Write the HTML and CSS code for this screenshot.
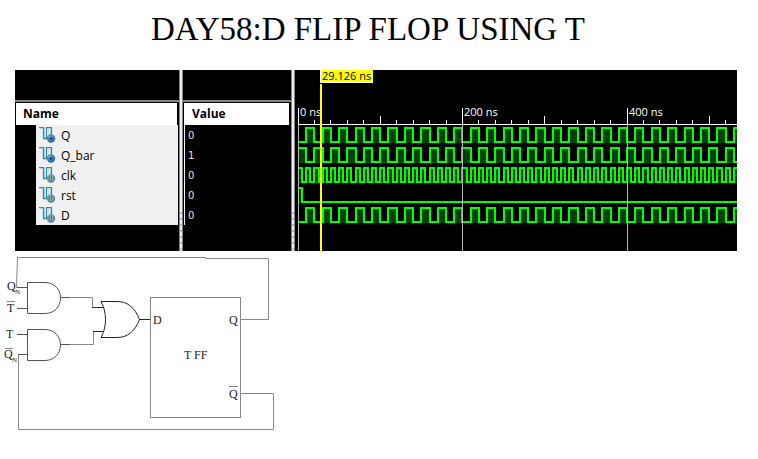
FILE: index.html
```html
<!DOCTYPE html>
<html lang="en">
<head>
<meta charset="utf-8">
<title>DAY58:D FLIP FLOP USING T</title>
<link rel="stylesheet" href="styles.css">
</head>
<body>
<svg class="defs" aria-hidden="true">
  <defs>
    <radialGradient id="ball" cx="40%" cy="35%" r="65%">
      <stop offset="0" stop-color="#6fb0dd"/>
      <stop offset="1" stop-color="#20629f"/>
    </radialGradient>
    <radialGradient id="ball-in" cx="40%" cy="35%" r="65%">
      <stop offset="0" stop-color="#8fb6bd"/>
      <stop offset="1" stop-color="#3b7fb0"/>
    </radialGradient>
    <symbol id="pulse" viewBox="0 0 17 17">
      <path d="M5.500 2V11.500M9.500 11V2.500H11.500V8" fill="none" stroke="#c3dcea" stroke-width="1"/>
      <path d="M0 0.500H4.500V11.500H7.500V0.500H12.500V8" fill="none" stroke="#2f8c98" stroke-width="1.300"/>
    </symbol>
    <symbol id="signal-out" viewBox="0 0 17 17">
      <use href="#pulse" width="17" height="17"/>
      <circle cx="12" cy="11.500" r="4.200" fill="url(#ball)"/>
      <path d="M10.500 11.500H13.500M12 10V13" stroke="#092f5c" fill="none"/>
    </symbol>
    <symbol id="signal-in" viewBox="0 0 17 17">
      <use href="#pulse" width="17" height="17"/>
      <circle cx="12" cy="11.500" r="4.200" fill="url(#ball-in)"/>
      <path d="M11.500 13.500V10.500M13.500 13.500V10.500" stroke="#b3b878" fill="none"/>
      <path d="M10.500 9.500V12.500M12.500 9.500V13" stroke="#2d6cab" fill="none"/>
    </symbol>
  </defs>
</svg>

<h1 class="title">DAY58:D FLIP FLOP USING T</h1>

<main>
  <section class="viewer">
    <div class="pane names">
      <h2 class="head">Name</h2>
      <ul class="rows">
        <li><svg class="icon"><use href="#signal-out"/></svg>Q</li>
        <li><svg class="icon"><use href="#signal-out"/></svg>Q_bar</li>
        <li><svg class="icon"><use href="#signal-in"/></svg>clk</li>
        <li><svg class="icon"><use href="#signal-in"/></svg>rst</li>
        <li><svg class="icon"><use href="#signal-in"/></svg>D</li>
      </ul>
    </div>
    <div class="splitter"></div>
    <div class="pane values">
      <h2 class="head">Value</h2>
      <ul class="rows">
        <li>0</li>
        <li>1</li>
        <li>0</li>
        <li>0</li>
        <li>0</li>
      </ul>
    </div>
    <div class="splitter"></div>
    <div class="waves">
      <svg id="scope" class="scope" role="img" aria-label="Waveforms"></svg>
      <span class="marker">29.126 ns</span>
    </div>
  </section>

  <svg class="circuit" width="290" height="190" viewBox="0 251 290 190" role="img" aria-label="D flip flop built from a T flip flop">
    <g class="wire">
      <path d="M27 287.500H16.500L17.500 257.500H206V258.500H268.500V319.500H240"/>
      <path d="M27 354.500H18.500V429.500H273.500V393.500H240"/>
      <path d="M69 297.500H92.500V307.500M69 344.500H93.500V331.500"/>
      <rect x="150.500" y="297.500" width="90" height="120"/>
      <path d="M7 301.500H15M5 348.500H13M229 386.500H238"/>
    </g>
    <g class="gate">
      <path d="M17 287.500H27M17 308.500H27M17 334.500H27M18 354.500H27M61 297.500H70M61 344.500H70"/>
      <path d="M27.500 282.500H45C54 282.500 60.500 289 60.500 298C60.500 307 54 313.500 45 313.500H27.500Z"/>
      <path d="M27.500 329.500H45C54 329.500 60.500 336 60.500 345C60.500 354 54 360.500 45 360.500H27.500Z"/>
    </g>
    <g class="gate strong">
      <path d="M92 307.500H104M93 331.500H104M139 319.500H150"/>
      <path d="M101 301.500H117C128 301.500 135 308 139.500 319.500C135 331 128 337.500 117 337.500H101C107 327 107 312 101 301.500Z"/>
    </g>
    <g class="label">
      <text x="7" y="290">Q</text><text class="sub" x="15" y="294">N</text>
      <text x="7" y="312">T</text>
      <text x="6" y="338">T</text>
      <text x="4" y="358">Q</text><text class="sub" x="12" y="362">N</text>
      <text x="153" y="324">D</text>
      <text x="229" y="324">Q</text>
      <text x="184" y="359">T FF</text>
      <text x="229" y="398">Q</text>
    </g>
  </svg>
</main>
<script src="scope.js"></script>
</body>
</html>
```

FILE: styles.css
```css
* { box-sizing: border-box; }

body {
  margin: 0;
  background: #fff;
  color: #000;
  font-family: "Open Sans", "Noto Sans", sans-serif;
}

.defs { position: absolute; width: 0; height: 0; }

.title {
  height: 70px;
  margin: 0;
  padding: 8px 22px 0 0;
  text-align: center;
  font: 400 33px/42px "Liberation Serif", serif;
}

.viewer {
  display: flex;
  height: 181px;
  margin: 0 21px 0 15px;
  background: #000;
}

.pane { border-top: 30px solid #000; }
.pane::before {
  content: "";
  display: block;
  height: 2px;
  background: #82838b;
}
.names { flex: 0 0 164px; }
.values { flex: 0 0 108px; }

.head {
  height: 23px;
  margin: 0;
  padding-left: 7px;
  border: solid #000;
  border-width: 1px 2px 0 1px;
  background: #fff;
  font-size: 12px;
  font-weight: 700;
  line-height: 22px;
}

.rows {
  margin: 0;
  padding: 0;
  list-style: none;
}
.rows li {
  display: flex;
  align-items: center;
  height: 20px;
}
.names .rows {
  margin: 0 1px 0 21px;
  background: #f0f0f0;
  font-size: 12px;
}
.names .rows li { gap: 5px; padding-left: 3px; }
.icon { width: 17px; height: 17px; }

.values .rows {
  margin-left: 1px;
  padding-left: 3px;
  border-left: 1px solid #fff;
  color: #e8e4dc;
  font: 10px "DejaVu Sans", sans-serif;
}
.values .head { padding-left: 8px; }

.splitter {
  flex: 0 0 4px;
  border: solid #82838b;
  border-width: 0 1px;
  background: linear-gradient(#eee, #eee) top / 100% 140px no-repeat,
    repeating-linear-gradient(#eee 0 4px, #bbb 4px 6px);
}

.waves {
  position: relative;
  flex: 1;
  min-width: 0;
}
.scope {
  display: block;
  width: 100%;
  height: 181px;
}
.marker {
  position: absolute;
  top: 0;
  left: 25px;
  height: 13px;
  padding: 0 2px 0 1px;
  border: solid #fff;
  border-width: 0 0 1px 1px;
  background: #ff0;
  font-size: 11px;
  line-height: 11px;
  white-space: nowrap;
}

.axis { fill: #fff; }
.grid { fill: #b8b8b8; }
.tick-label { fill: #fff; font-size: 11px; }
.high { fill: #004000; }
.trace { fill: none; stroke: #0f0; stroke-width: 2px; }
.cursor { fill: #ff0; }

.circuit { display: block; }
.wire { fill: none; stroke: #888; }
.gate { fill: none; stroke: #555; }
.strong { stroke: #222; }
.label { fill: #222; font: 12px "Liberation Serif", serif; }
.label .sub { font-size: 7px; }
```

FILE: scope.js
```js
const svg = document.getElementById("scope");
const NS = "http://www.w3.org/2000/svg";
const SCALE = 0.8225;
const START = 3;
const LABEL_WIDTH = 40;

let width = 0;
let endNs = 0;

function add(name, attrs, text) {
  const el = document.createElementNS(NS, name);
  for (const key in attrs) el.setAttribute(key, attrs[key]);
  if (text) el.textContent = text;
  svg.appendChild(el);
}
const box = (cls, x, y, width, height) => add("rect", { class: cls, x, y, width, height });
const edge = t => Math.round(START - 0.05 + t * SCALE);

// Draws one signal from its start level and the times at which it toggles.
function trace(top, level, toggles) {
  const hi = top + 1;
  const lo = top + 15;
  let x = START + 1;
  let d = `M${x} ${level ? hi : lo}`;
  for (const t of toggles) {
    const next = edge(t);
    if (level) box("high", x, top, next - x, 16);
    level = !level;
    d += `H${next}V${level ? hi : lo}`;
    x = next;
  }
  add("path", { class: "trace", d: d + `H${edge(endNs)}` });
}
function every(step) {
  const times = [];
  for (let t = step; t < endNs; t += step) times.push(t);
  return times;
}

function draw() {
  svg.replaceChildren();
  width = svg.clientWidth;
  endNs = Math.ceil(width / SCALE) + 20;

  trace(57, false, every(10));
  trace(77, true, every(10));
  trace(97, true, every(5));
  trace(117, true, [5]);
  trace(137, false, every(10));

  box("axis", START, 54, width, 1);
  for (let t = 0; t < endNs; t += 20) {
    const x = Math.floor(START + t * SCALE);
    if (t % 200 === 0) {
      box("axis", x, 38, 1, 17);
      box("grid", x, 55, 1, 126);
      if (x + LABEL_WIDTH < width) {
        add("text", { class: "tick-label", x: x + 2, y: 46 }, `${t} ns`);
      }
    } else {
      const size = t % 100 === 0 ? 8 : 4;
      box("axis", x, 54 - size, 1, size);
    }
  }
  box("cursor", 25, 14, 2, 167);
}

draw();
window.addEventListener("resize", draw);
```
